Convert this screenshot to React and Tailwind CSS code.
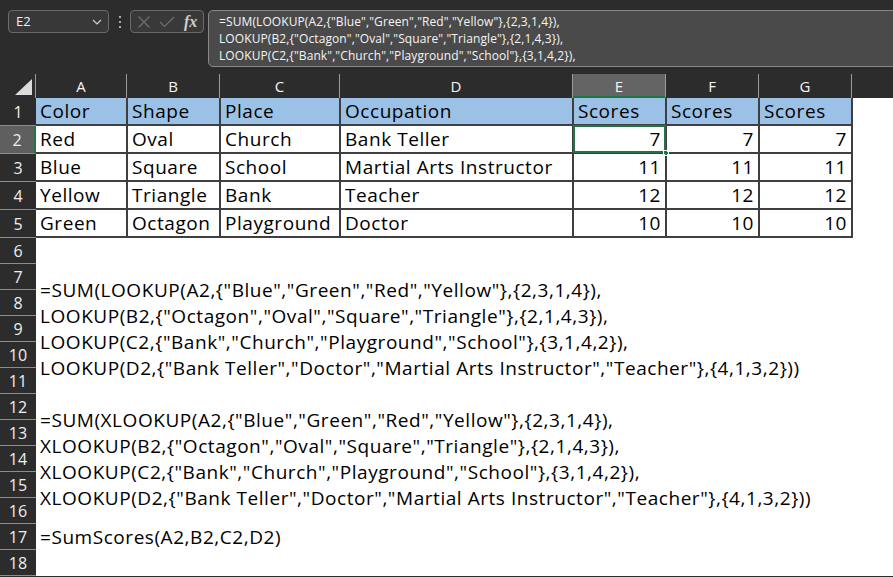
import React from 'react';

const columns = [
  { key: 'A', w: 'w-[91px]' },
  { key: 'B', w: 'w-[93px]' },
  { key: 'C', w: 'w-[120px]' },
  { key: 'D', w: 'w-[233px]' },
  { key: 'E', w: 'w-[93px]', active: true },
  { key: 'F', w: 'w-[93px]' },
  { key: 'G', w: 'w-[93px]' },
];

const header = ['Color', 'Shape', 'Place', 'Occupation', 'Scores', 'Scores', 'Scores'];

const rows = [
  ['Red', 'Oval', 'Church', 'Bank Teller', 7],
  ['Blue', 'Square', 'School', 'Martial Arts Instructor', 11],
  ['Yellow', 'Triangle', 'Bank', 'Teacher', 12],
  ['Green', 'Octagon', 'Playground', 'Doctor', 10],
];

const lookupLines = [
  '=SUM(LOOKUP(A2,{"Blue","Green","Red","Yellow"},{2,3,1,4}),',
  'LOOKUP(B2,{"Octagon","Oval","Square","Triangle"},{2,1,4,3}),',
  'LOOKUP(C2,{"Bank","Church","Playground","School"},{3,1,4,2}),',
  'LOOKUP(D2,{"Bank Teller","Doctor","Martial Arts Instructor","Teacher"},{4,1,3,2}))',
];

const xlookupLines = [
  '=SUM(XLOOKUP(A2,{"Blue","Green","Red","Yellow"},{2,3,1,4}),',
  'XLOOKUP(B2,{"Octagon","Oval","Square","Triangle"},{2,1,4,3}),',
  'XLOOKUP(C2,{"Bank","Church","Playground","School"},{3,1,4,2}),',
  'XLOOKUP(D2,{"Bank Teller","Doctor","Martial Arts Instructor","Teacher"},{4,1,3,2}))',
];

const rowNumbers = Array.from({ length: 18 }, (_, i) => i + 1);

const TopBar = () => (
  <div className="flex h-[74px] items-start pl-[8px] pt-[10px]">
    {/* Name box */}
    <div className="flex h-[23px] w-[101px] items-center justify-between rounded-[4px] border border-[#6a6a6a] bg-[#383838] pl-[7px] pr-[6px] text-[13px] text-[#f2f2f2]">
      <span>E2</span>
      <svg width="10" height="6" viewBox="0 0 10 6" fill="none" stroke="#d0d0d0" strokeWidth="1.2">
        <path d="M1 1l4 4 4-4" />
      </svg>
    </div>

    {/* Vertical ellipsis */}
    <div className="flex h-[23px] w-[21px] flex-col items-center justify-center gap-[3px]">
      <span className="h-[2px] w-[2px] bg-[#a8a8a8]" />
      <span className="h-[2px] w-[2px] bg-[#a8a8a8]" />
      <span className="h-[2px] w-[2px] bg-[#a8a8a8]" />
    </div>

    {/* Cancel / enter / fx */}
    <div className="flex h-[23px] w-[74px] items-center rounded-[4px] border border-[#6a6a6a] bg-[#393939] pl-[6px]">
      <svg width="14" height="14" viewBox="0 0 14 14" fill="none" stroke="#6f6f6f" strokeWidth="1.2">
        <path d="M1.5 1.5l11 11M12.5 1.5l-11 11" />
      </svg>
      <svg className="ml-[8px]" width="16" height="12" viewBox="0 0 16 12" fill="none" stroke="#6f6f6f" strokeWidth="1.2">
        <path d="M1 6l4.5 4.5L15 1" />
      </svg>
      <span className="ml-[9px] font-['Liberation_Serif'] text-[16px] leading-none font-bold italic text-[#cfcfcf]">fx</span>
    </div>

    {/* Formula box */}
    <div className="-mr-[6px] ml-[4px] h-[57px] flex-1 rounded-[5px] border border-[#8a8a8a] bg-[#4a4a4a] pl-[10px] pt-[2px] text-[12px] leading-[17px] tracking-[0.1px] whitespace-nowrap text-[#f5f5f5]">
      <div>{lookupLines[0]}</div>
      <div>{lookupLines[1]}</div>
      <div>{lookupLines[2]}</div>
    </div>
  </div>
);

const ColumnHeaders = () => (
  <div className="flex h-[24px]">
    <div className="flex w-[36px] items-end justify-end border-r border-[#9a9a9a] pr-[3px] pb-[3px]">
      <svg width="17" height="16" viewBox="0 0 17 16">
        <path d="M17 0L17 16L0 16Z" fill="#dcdcdc" />
      </svg>
    </div>
    {columns.map((c) => (
      <div
        key={c.key}
        className={`flex ${c.w} items-center justify-center border-r border-[#9a9a9a] text-[15px] text-[#f4f4f4] ${
          c.active ? 'border-b-2 border-b-[#217346] bg-[#646464] pt-[2px]' : ''
        }`}
      >
        {c.key}
      </div>
    ))}
    <div className="flex-1" />
  </div>
);

const RowHeaders = () => (
  <div className="flex w-[36px] shrink-0 flex-col">
    {rowNumbers.map((n) => (
      <div
        key={n}
        className={`flex shrink-0 items-center justify-center border-b border-[#8c8c8c] text-[16px] text-[#eeeeee] ${
          n <= 5 ? 'h-[28px]' : 'h-[26px]'
        } ${n === 2 ? 'border-r-2 border-r-[#217346] bg-[#5f5f5f]' : ''}`}
      >
        {n}
      </div>
    ))}
  </div>
);

const DataTable = () => (
  <div className="grid w-fit grid-cols-[90px_91px_118px_231px_91px_91px_91px] gap-[2px] bg-[#3f3f3f] pr-[2px] pb-[2px]">
    {header.map((h, i) => (
      <div key={`h${i}`} className="flex h-[26px] items-center bg-[#9bc2e6] pl-[4px]">
        {h}
      </div>
    ))}
    {rows.map((r, ri) => (
      <React.Fragment key={ri}>
        {r.slice(0, 4).map((v, ci) => (
          <div key={ci} className="flex h-[26px] items-center bg-white pl-[4px]">
            {v}
          </div>
        ))}
        {[0, 1, 2].map((k) => (
          <div
            key={`s${k}`}
            className={`relative flex h-[26px] items-center justify-end bg-white pr-[4px] ${
              ri === 0 && k === 0 ? 'outline-2 -outline-offset-1 outline-[#217346]' : ''
            }`}
          >
            {r[4]}
            {ri === 0 && k === 0 && (
              <span className="absolute -right-[4px] -bottom-[4px] h-[6px] w-[6px] border border-white bg-[#217346]" />
            )}
          </div>
        ))}
      </React.Fragment>
    ))}
  </div>
);

const Lines = ({ items }) => (
  <div className="leading-[26px] whitespace-nowrap">
    {items.map((l) => (
      <div key={l}>{l}</div>
    ))}
  </div>
);

export default function App() {
  return (
    <div className="h-[577px] w-[893px] overflow-hidden bg-[#2c2c2c] font-['Open_Sans',sans-serif]">
      <TopBar />
      <ColumnHeaders />
      <div className="flex">
        <RowHeaders />
        <div className="flex-1 bg-white text-[19px] tracking-[0.55px] text-black">
          <DataTable />
          <div className="mt-[39px] pl-[4px]">
            <Lines items={lookupLines} />
          </div>
          <div className="mt-[26px] pl-[4px]">
            <Lines items={xlookupLines} />
          </div>
          <div className="mt-[13px] pl-[4px] leading-[26px]">=SumScores(A2,B2,C2,D2)</div>
        </div>
      </div>
    </div>
  );
}
